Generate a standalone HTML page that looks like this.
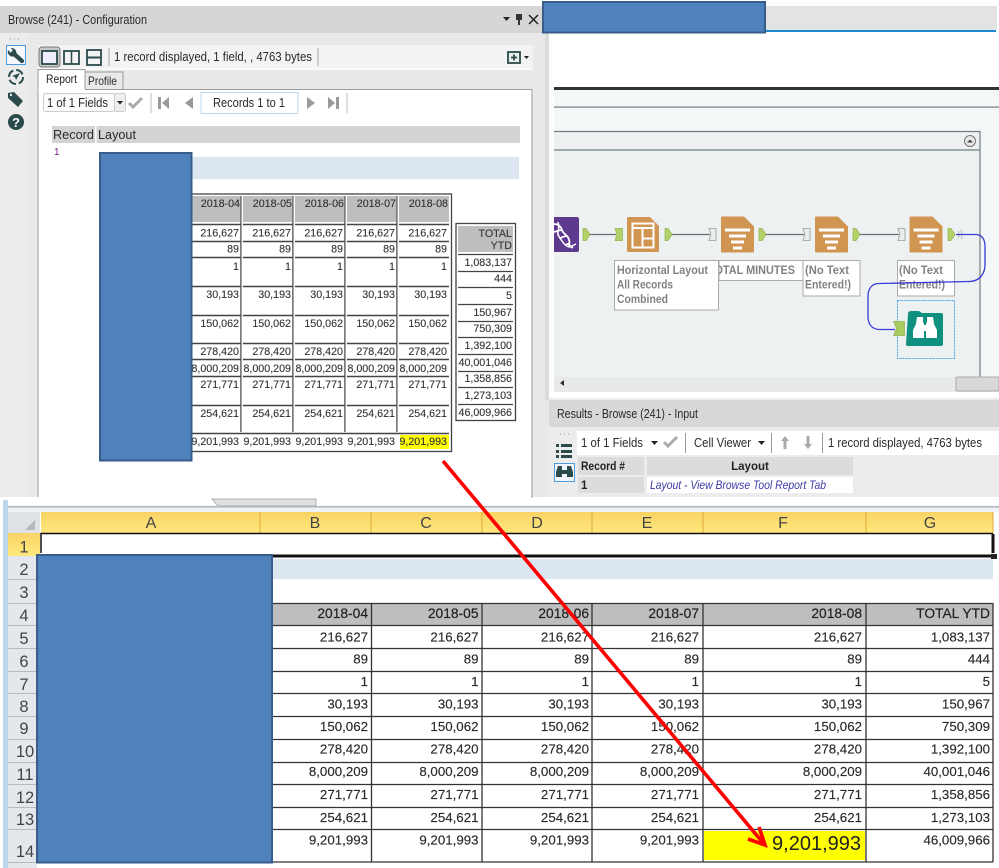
<!DOCTYPE html>
<html>
<head>
<meta charset="utf-8">
<title>Browse Configuration</title>
<style>
html,body{margin:0;padding:0;background:#fff;width:999px;height:868px;overflow:hidden}
svg{display:block;font-family:"Liberation Sans",Arial,sans-serif;filter:blur(.35px)}
</style>
</head>
<body>
<svg xmlns="http://www.w3.org/2000/svg" width="999" height="868" viewBox="0 0 999 868">
<defs>
<linearGradient id="hd" x1="0" y1="0" x2="0" y2="1"><stop offset="0" stop-color="#f9d265"/><stop offset="1" stop-color="#ffe97e"/></linearGradient>
<clipPath id="cv"><rect x="554" y="90" width="445" height="300"/></clipPath>
<g id="flt">
<path d="M0 1q0-1 1-1h22l10 10v25q0 1-1 1H1q-1 0-1-1z" fill="#d19552"/>
<path d="M4 12h25v3H4zM8 18h17v3H8zM10 24h13v3H10zM12 30h9v3h-9z" fill="#fff"/>
</g>
<path id="out" d="M0 0h3l4 6-4 6H0z" fill="#b3d26a" stroke="#8fb04a" stroke-width=".7"/>
<path id="inp" d="M0 0h7v12H0l2-6z" fill="#e9eded" stroke="#999" stroke-width=".8"/>
</defs>

<!-- LEFT PANEL -->
<rect x="0" y="6" width="549" height="491" fill="#e9e9e9"/>
<rect x="0" y="6" width="549" height="27" fill="#d6d6d6"/>
<text x="8" y="24" font-size="12.500" fill="#2a2a2a" textLength="139" lengthAdjust="spacingAndGlyphs">Browse (241) - Configuration</text>
<path d="M503 17h7l-3.500 4z" fill="#222"/>
<path d="M516 14h6v6h-2v5h-2v-5h-2z" fill="#333"/>
<path d="M529 15l9 9M538 15l-9 9" stroke="#222" stroke-width="1.500"/>
<!-- side toolbar -->
<rect x="0" y="33" width="27" height="464" fill="#ececec"/>
<path d="M10 39h1M14 39h1M18 39h1" stroke="#999"/>
<rect x="6.500" y="45.500" width="19" height="19" fill="#f5f8fb" stroke="#4f9be0"/>
<path d="M13 53l9 8" stroke="#2b4a4a" stroke-width="4.200" stroke-linecap="round" fill="none"/>
<path d="M8 50a5 5 0 0 0 7 6l1-1a5 5 0 0 0-5-7l2 3-2 2z" fill="#2b4a4a"/>
<circle cx="16" cy="77" r="7" fill="none" stroke="#2b4a4a" stroke-width="2" stroke-dasharray="8 3"/>
<path d="M20 73l-8 3 3 1 1 3z" fill="#2b4a4a"/>
<path d="M8 93l6-1 9 9-5 6-10-9z" fill="#2b4a4a"/>
<circle cx="11" cy="95" r="1.200" fill="#ececec"/>
<circle cx="16" cy="122" r="8" fill="#2b4a4a"/>
<text x="16" y="127" font-size="13" font-weight="bold" fill="#fff" text-anchor="middle">?</text>
<!-- main white panel -->
<rect x="38" y="89" width="494" height="417" fill="#fff"/>
<rect x="38" y="45" width="495" height="23" fill="#f3f3f3"/>
<rect x="38" y="68" width="495" height="2" fill="#fafafa"/>
<path d="M38 497V89.500H532V498" fill="none" stroke="#9a9a9a"/>
<rect x="39" y="47" width="21" height="20" rx="3" fill="#c9c9c9" stroke="#777"/>
<rect x="42" y="51" width="15" height="13" fill="#eef" stroke="#2b4a4a" stroke-width="1.800"/>
<rect x="64" y="51" width="15" height="13" fill="#f3f3f3" stroke="#2b4a4a" stroke-width="1.800"/>
<path d="M71.500 51v13" stroke="#2b4a4a" stroke-width="1.500"/>
<rect x="87" y="50" width="14" height="15" fill="#f3f3f3" stroke="#2b4a4a" stroke-width="1.800"/>
<path d="M87 57.500h14" stroke="#2b4a4a" stroke-width="2"/>
<path d="M109 48v18M318 48v18" stroke="#aaa"/>
<text x="114" y="61" font-size="13" fill="#2a2a2a" textLength="198" lengthAdjust="spacingAndGlyphs">1 record displayed, 1 field, , 4763 bytes</text>
<rect x="508" y="52" width="12" height="11" fill="#e8eeee" stroke="#2b4a4a" stroke-width="1.800"/>
<path d="M514 54.500v6M511 57.500h6" stroke="#2b4a4a" stroke-width="1.800"/>
<path d="M524 56h5l-2.500 3z" fill="#222"/>
<!-- tabs -->
<path d="M85 89V72h38v17" fill="#e9e9e9" stroke="#999"/>
<text x="88" y="85" font-size="12" fill="#2a2a2a" textLength="29" lengthAdjust="spacingAndGlyphs">Profile</text>
<path d="M38 90V69.500h47V90z" fill="#fff"/>
<path d="M38 89V69.500h47V89" fill="none" stroke="#999"/>
<text x="46" y="83" font-size="12" fill="#222" textLength="31" lengthAdjust="spacingAndGlyphs">Report</text>
<!-- nav bar -->
<rect x="43.500" y="93.500" width="71" height="18" rx="2" fill="#fbfbfb" stroke="#ccc"/>
<text x="47" y="107" font-size="12.500" fill="#2a2a2a" textLength="61" lengthAdjust="spacingAndGlyphs">1 of 1 Fields</text>
<rect x="114.500" y="93.500" width="11" height="18" rx="2" fill="#eee" stroke="#ccc"/>
<path d="M117 101h6l-3 3.500z" fill="#222"/>
<path d="M129 103l4 4 9-9" fill="none" stroke="#aaa" stroke-width="3"/>
<path d="M151 93v20M347 93v20" stroke="#bbb"/>
<path d="M158 97h3v12h-3zM169 97v12l-7-6z" fill="#9a9a9a"/>
<path d="M193 97v12l-8-6z" fill="#9a9a9a"/>
<rect x="201" y="92.500" width="97" height="21" fill="#fff" stroke="#bcd6ec"/>
<text x="213" y="107" font-size="12.500" fill="#2a2a2a" textLength="72" lengthAdjust="spacingAndGlyphs">Records 1 to 1</text>
<path d="M307 97l8 6-8 6z" fill="#9a9a9a"/>
<path d="M328 97l7 6-7 6zM336 97h3v12h-3z" fill="#9a9a9a"/>
<rect x="52" y="126" width="468" height="17" fill="#d3d3d3"/>
<rect x="95" y="126" width="1.500" height="17" fill="#fff"/>
<text x="53" y="139" font-size="13" fill="#2a2a2a" textLength="41" lengthAdjust="spacingAndGlyphs">Record</text>
<text x="98" y="139" font-size="13" fill="#2a2a2a" textLength="38" lengthAdjust="spacingAndGlyphs">Layout</text>
<text x="54" y="155" font-size="10" fill="#7a1a8a">1</text>
<rect x="192" y="157" width="327" height="22" fill="#dce6f1"/>

<!-- UPPER TABLE -->
<rect x="190" y="194" width="261.500" height="257.500" fill="#fff" stroke="#444" stroke-width="1.300"/>
<path d="M399 196h50V222h-50zM347 196h49v26h-49zM295 196h49v26h-49zM243 196h49v26h-49zM192 196h48v26h-48z" fill="#bebebe"/>
<g stroke="#444" stroke-width="1.400" fill="none">
<path d="M192 224.500h257M192 241.500h257M192 257.500h257M192 286.500h257M192 315.500h257M192 343.500h257M192 359.500h257M192 376.500h257M192 405.500h257M192 433.500h257"/>
<path d="M241 196v236M293 196v236M345 196v236M397 196v236"/>
</g>
<g stroke="#fff" stroke-width="1.400">
<path d="M242.200 196v236M294.200 196v236M346.200 196v236M398.200 196v236"/>
</g>
<path d="M400 435h49v14h-49z" fill="#ffff00"/>
<g font-size="10.700" fill="#333" stroke="#333" stroke-width=".12" text-anchor="end">
<text y="207"><tspan x="240">2018-04</tspan><tspan x="292">2018-05</tspan><tspan x="344">2018-06</tspan><tspan x="396">2018-07</tspan><tspan x="448">2018-08</tspan></text>
<text y="236.500"><tspan x="239">216,627</tspan><tspan x="291">216,627</tspan><tspan x="343">216,627</tspan><tspan x="395">216,627</tspan><tspan x="447">216,627</tspan></text>
<text y="252.500"><tspan x="239">89</tspan><tspan x="291">89</tspan><tspan x="343">89</tspan><tspan x="395">89</tspan><tspan x="447">89</tspan></text>
<text y="270"><tspan x="239">1</tspan><tspan x="291">1</tspan><tspan x="343">1</tspan><tspan x="395">1</tspan><tspan x="447">1</tspan></text>
<text y="298"><tspan x="239">30,193</tspan><tspan x="291">30,193</tspan><tspan x="343">30,193</tspan><tspan x="395">30,193</tspan><tspan x="447">30,193</tspan></text>
<text y="327"><tspan x="239">150,062</tspan><tspan x="291">150,062</tspan><tspan x="343">150,062</tspan><tspan x="395">150,062</tspan><tspan x="447">150,062</tspan></text>
<text y="355"><tspan x="239">278,420</tspan><tspan x="291">278,420</tspan><tspan x="343">278,420</tspan><tspan x="395">278,420</tspan><tspan x="447">278,420</tspan></text>
<text y="372"><tspan x="239">8,000,209</tspan><tspan x="291">8,000,209</tspan><tspan x="343">8,000,209</tspan><tspan x="395">8,000,209</tspan><tspan x="447">8,000,209</tspan></text>
<text y="388"><tspan x="239">271,771</tspan><tspan x="291">271,771</tspan><tspan x="343">271,771</tspan><tspan x="395">271,771</tspan><tspan x="447">271,771</tspan></text>
<text y="417"><tspan x="239">254,621</tspan><tspan x="291">254,621</tspan><tspan x="343">254,621</tspan><tspan x="395">254,621</tspan><tspan x="447">254,621</tspan></text>
<text y="445"><tspan x="239">9,201,993</tspan><tspan x="291">9,201,993</tspan><tspan x="343">9,201,993</tspan><tspan x="395">9,201,993</tspan><tspan x="447">9,201,993</tspan></text>
</g>
<!-- right total table -->
<rect x="456" y="223.500" width="59.500" height="197" fill="#fff" stroke="#444" stroke-width="1.300"/>
<rect x="458" y="226" width="55" height="26" fill="#bebebe"/>
<path d="M458 254.500h55M458 271.500h55M458 287.500h55M458 304.500h55M458 321.500h55M458 337.500h55M458 354.500h55M458 371.500h55M458 387.500h55M458 404.500h55" stroke="#444" stroke-width="1.300"/>
<g font-size="10.700" fill="#333" stroke="#333" stroke-width=".12" text-anchor="end">
<text x="512" y="237">TOTAL</text><text x="512" y="249">YTD</text>
<text x="512" y="266">1,083,137</text><text x="512" y="282">444</text><text x="512" y="299">5</text><text x="512" y="316">150,967</text><text x="512" y="332">750,309</text><text x="512" y="349">1,392,100</text><text x="512" y="366">40,001,046</text><text x="512" y="382">1,358,856</text><text x="512" y="399">1,273,103</text><text x="512" y="416">46,009,966</text>
</g>
<rect x="100" y="153" width="91.500" height="307.500" fill="#4f81bd" stroke="#385d8a" stroke-width="2"/>

<!-- TOP RIGHT -->
<rect x="765" y="6" width="232" height="24" fill="#e3e3e3"/>
<rect x="765" y="30" width="231" height="2" fill="#1e88d0"/>
<rect x="545" y="33" width="4" height="367" fill="#dcdcdc"/>

<!-- CANVAS -->
<rect x="554" y="90" width="445" height="302" fill="#f4f7f8"/>
<rect x="554" y="87" width="445" height="3" fill="#333"/>
<rect x="554" y="106.500" width="445" height="1.200" fill="#6d7f7f"/>
<rect x="554" y="131" width="426" height="246" fill="#eef1f2"/>
<path d="M554 131.500h426V377M554 150h426" fill="none" stroke="#6d7f7f" stroke-width="1.200"/>
<circle cx="970" cy="141" r="5.500" fill="#e8e8e8" stroke="#777"/>
<path d="M967 142.500l3-3 3 3z" fill="#444"/>
<rect x="554" y="377" width="445" height="15" fill="#e8eaea"/>
<path d="M564 380v6l-4-3z" fill="#333"/>
<rect x="956" y="377" width="43" height="14" rx="1.500" fill="#d8d8d8" stroke="#aaa"/>

<!-- labels -->
<g clip-path="url(#cv)">
<rect x="719" y="260.500" width="84" height="20" fill="#fff" stroke="#aaa"/>
<text x="708" y="274" font-size="11.500" font-weight="bold" fill="#7f8386" textLength="87" lengthAdjust="spacingAndGlyphs">TOTAL MINUTES</text>
<rect x="614.500" y="260.500" width="104" height="49.500" fill="#fff" stroke="#aaa"/>
<g font-size="11.500" font-weight="bold" fill="#7f8386">
<text x="617" y="274" textLength="91" lengthAdjust="spacingAndGlyphs">Horizontal Layout</text>
<text x="617" y="288.500" textLength="56" lengthAdjust="spacingAndGlyphs">All Records</text>
<text x="617" y="303" textLength="51" lengthAdjust="spacingAndGlyphs">Combined</text>
</g>
<rect x="803" y="260.500" width="57" height="35.500" fill="#fff" stroke="#aaa"/>
<rect x="897.500" y="260.500" width="57" height="35.500" fill="#fff" stroke="#aaa"/>
<g font-size="11.500" font-weight="bold" fill="#7f8386">
<text x="805" y="274" textLength="44" lengthAdjust="spacingAndGlyphs">(No Text</text>
<text x="805" y="288.500" textLength="46" lengthAdjust="spacingAndGlyphs">Entered!)</text>
<text x="899" y="274" textLength="44" lengthAdjust="spacingAndGlyphs">(No Text</text>
<text x="899" y="288.500" textLength="46" lengthAdjust="spacingAndGlyphs">Entered!)</text>
</g>
<!-- nodes -->
<path d="M540 217h37q2 0 2 2v31q0 2-2 2h-37z" fill="#5e3a8e"/>
<path d="M554 224c5 0 7 3 8 6s3 4 5 6 3 6 2 9l4 3M554 232c3-1 6-2 8-2M560 238c3-1 5-2 7-2M566 245c1-1 3-2 3 0" fill="none" stroke="#fff" stroke-width="1.800"/>
<path d="M558 222c1 4 1 7 0 10s2 6 4 9 5 6 8 6l6-3" fill="none" stroke="#fff" stroke-width="1.500"/>
<path d="M627 218q0-1 1-1h22l9 9v25q0 1-1 1h-30q-1 0-1-1z" fill="#d19552"/>
<path d="M632.500 223.500h21v24h-21zM632.500 228h21M642.500 228v19.500M642.500 238.500h11" fill="none" stroke="#fff" stroke-width="2"/>
<use href="#flt" x="721" y="216.500"/>
<use href="#flt" x="815" y="216.500"/>
<use href="#flt" x="909.500" y="216.500"/>
<!-- connections -->
<path d="M589 234.500h27M671 234.500h39M765 234.500h39M860 234.500h39" stroke="#6a7070" stroke-width="1.300"/>
<use href="#out" x="583" y="228.500"/>
<use href="#out" x="665" y="228.500"/>
<use href="#out" x="759" y="228.500"/>
<use href="#out" x="853" y="228.500"/>
<use href="#out" x="948" y="228.500"/>
<path d="M615 228.500h7.500v12H615l2-6z" fill="#b3d26a" stroke="#8fb04a" stroke-width=".7"/>
<use href="#inp" x="709" y="228.500"/>
<use href="#inp" x="803" y="228.500"/>
<use href="#inp" x="898" y="228.500"/>
<path d="M958 231q2 3.500 0 7M961 230q2 4.500 0 9" fill="none" stroke="#bbb"/>
<path d="M956 234.500h20c6 0 9 5 9 12v18c0 10-6 17-16 17l-90 2c-7 0-11 5-11 13v20c0 8 4 13 12 13h15" fill="none" stroke="#3a3ad8" stroke-width="1.300"/>
<rect x="897.500" y="300.500" width="57" height="58" fill="none" stroke="#4aa3e8" stroke-dasharray="2 1"/>
<path d="M908 314q0-3 3-3h8l3 2h19q2 0 2 2v29q0 2-2 2h-33q-2 0-2-2z" fill="#10917f"/>
<path d="M917 317h6v5l1 2v14h-11v-8l3-6zM927 317h6l1 7 3 6v8h-11v-14l1-2z" fill="#fff"/>
<rect x="923" y="325" width="4" height="6" fill="#fff"/>
<path d="M893.500 321.500h11v14h-11l3-7z" fill="#a8cc60" stroke="#8fb04a" stroke-width=".7"/>
</g>

<!-- RESULTS -->
<rect x="549" y="392" width="450" height="6" fill="#fff"/>
<rect x="549" y="398" width="450" height="99" fill="#ececec"/>
<rect x="549" y="400" width="450" height="27" fill="#d8d8d8"/>
<text x="557" y="418" font-size="12.500" fill="#2a2a2a" textLength="141" lengthAdjust="spacingAndGlyphs">Results - Browse (241) - Input</text>
<rect x="577" y="431" width="422" height="24" fill="#fff"/>
<path d="M560 434h1M564 434h1M568 434h1" stroke="#999"/>
<path d="M556 444h3v3h-3zM561 444h11v3h-11zM556 450h3v3h-3zM561 450h11v3h-11zM556 455h3v3h-3zM561 455h11v3h-11z" fill="#2b4a4a"/>
<rect x="554.500" y="463.500" width="20" height="18" fill="#f2f6fa" stroke="#4f9be0"/>
<path d="M558 466h4v11h-6v-5zM567 466h4l2 6v5h-6z" fill="#2b4a4a"/>
<rect x="562" y="470" width="5" height="4" fill="#2b4a4a"/>
<text x="581" y="447" font-size="12.500" fill="#2a2a2a" textLength="62" lengthAdjust="spacingAndGlyphs">1 of 1 Fields</text>
<path d="M651 441h7l-3.500 4z" fill="#222"/>
<path d="M664 442l4 4 9-9" fill="none" stroke="#aaa" stroke-width="3"/>
<path d="M685.500 433v20M771.500 433v20M822.500 433v20" stroke="#999"/>
<text x="694" y="447" font-size="12.500" fill="#2a2a2a" textLength="57" lengthAdjust="spacingAndGlyphs">Cell Viewer</text>
<path d="M758 441h7l-3.500 4z" fill="#222"/>
<path d="M785 436l4 5h-2.500v8h-3v-8H781z" fill="#aaa"/>
<path d="M808 449l4-5h-2.500v-8h-3v8H804z" fill="#aaa"/>
<text x="828" y="447" font-size="12.500" fill="#2a2a2a" textLength="154" lengthAdjust="spacingAndGlyphs">1 record displayed, 4763 bytes</text>
<rect x="578" y="457" width="66" height="18" fill="#dcdcdc"/>
<rect x="647" y="457" width="206" height="18" fill="#dcdcdc"/>
<rect x="578" y="477" width="66" height="16" fill="#dcdcdc"/>
<rect x="647" y="477" width="206" height="16" fill="#fff"/>
<text x="581" y="470" font-size="11.500" font-weight="bold" fill="#222" textLength="44" lengthAdjust="spacingAndGlyphs">Record #</text>
<text x="750" y="470" font-size="11.500" font-weight="bold" fill="#222" text-anchor="middle">Layout</text>
<text x="581" y="489" font-size="11.500" font-weight="bold" fill="#222">1</text>
<text x="650" y="489" font-size="11.500" font-style="italic" fill="#3a3aa8" textLength="176" lengthAdjust="spacingAndGlyphs">Layout - View Browse Tool Report Tab</text>

<!-- EXCEL -->
<rect x="0" y="498" width="999" height="370" fill="#fff"/>
<path d="M212 499l6 7h98v-7z" fill="#e0e0e0" stroke="#999" stroke-width=".7"/>
<rect x="8" y="506" width="991" height="1.500" fill="#b0b4bc"/>
<rect x="8" y="507.500" width="991" height="4.500" fill="#eef1f6"/>
<rect x="3" y="500" width="5" height="368" fill="#bcd6ee"/>
<rect x="8" y="512" width="32" height="21" fill="#dfe3e8"/>
<path d="M35 520v10H25z" fill="#b4b9c0"/>
<rect x="41" y="512" width="952" height="21" fill="url(#hd)"/>
<path d="M260 512v21M371 512v21M482 512v21M592 512v21M703 512v21M866 512v21M993 512v21" stroke="#e0a83a"/>
<rect x="8" y="533" width="32" height="23" fill="url(#hd)"/>
<rect x="8" y="556" width="29" height="312" fill="#e4e7ec"/>
<path d="M8 579.500h29M8 603.500h29M8 625.500h29M8 648.500h29M8 671.500h29M8 693.500h29M8 716.500h29M8 739.500h29M8 762.500h29M8 784.500h29M8 807.500h29M8 829.500h29M8 862.500h29" stroke="#b5b8bd"/>
<g font-size="16" fill="#444" text-anchor="middle">
<text x="151" y="528">A</text><text x="315" y="528">B</text><text x="426" y="528">C</text><text x="537" y="528">D</text><text x="647" y="528">E</text><text x="783" y="528">F</text><text x="930" y="528">G</text>
</g>
<g font-size="16.500" fill="#444" text-anchor="middle">
<text x="24" y="552.500">1</text><text x="24" y="575">2</text><text x="24" y="598">3</text><text x="24" y="621">4</text><text x="24" y="644">5</text><text x="24" y="667">6</text><text x="24" y="690">7</text><text x="24" y="712">8</text><text x="24" y="734">9</text><text x="25" y="757">10</text><text x="25" y="780">11</text><text x="25" y="803">12</text><text x="25" y="825">13</text><text x="25" y="857">14</text>
</g>
<!-- row 1 selection -->
<path d="M41 553V533.500H993" fill="none" stroke="#111" stroke-width="1.500"/>
<path d="M272 556h720" stroke="#111" stroke-width="3"/>
<path d="M993 534v19" stroke="#111" stroke-width="3"/>
<rect x="991" y="554" width="6" height="5" fill="#222"/>
<rect x="272" y="559" width="721" height="20" fill="#dce6f1"/>
<rect x="272" y="604" width="721" height="21" fill="#bebebe"/>
<g stroke="#333" stroke-width="1.300" fill="none">
<path d="M272 603.500H993M272 625.500H993M272 648.500H993M272 671.500H993M272 693.500H993M272 716.500H993M272 739.500H993M272 762.500H993M272 784.500H993M272 807.500H993M272 829.500H993M272 862H993"/>
<path d="M371.500 603v259M482 603v259M592 603v259M703 603v259M866 603v259M993 603v259"/>
</g>
<rect x="704" y="831" width="161" height="29" fill="#ffff00"/>
<g font-size="13.800" fill="#222" stroke="#222" stroke-width=".2" text-anchor="end">
<text y="618"><tspan x="368">2018-04</tspan><tspan x="478.500">2018-05</tspan><tspan x="589">2018-06</tspan><tspan x="699">2018-07</tspan><tspan x="862">2018-08</tspan><tspan x="990">TOTAL YTD</tspan></text>
</g>
<g font-size="13.300" fill="#2a2a2a" stroke="#2a2a2a" stroke-width=".15" text-anchor="end">
<text y="641.500"><tspan x="368">216,627</tspan><tspan x="478.500">216,627</tspan><tspan x="589">216,627</tspan><tspan x="699">216,627</tspan><tspan x="862">216,627</tspan><tspan x="990">1,083,137</tspan></text>
<text y="663.500"><tspan x="368">89</tspan><tspan x="478.500">89</tspan><tspan x="589">89</tspan><tspan x="699">89</tspan><tspan x="862">89</tspan><tspan x="990">444</tspan></text>
<text y="686"><tspan x="368">1</tspan><tspan x="478.500">1</tspan><tspan x="589">1</tspan><tspan x="699">1</tspan><tspan x="862">1</tspan><tspan x="990">5</tspan></text>
<text y="708.500"><tspan x="368">30,193</tspan><tspan x="478.500">30,193</tspan><tspan x="589">30,193</tspan><tspan x="699">30,193</tspan><tspan x="862">30,193</tspan><tspan x="990">150,967</tspan></text>
<text y="731"><tspan x="368">150,062</tspan><tspan x="478.500">150,062</tspan><tspan x="589">150,062</tspan><tspan x="699">150,062</tspan><tspan x="862">150,062</tspan><tspan x="990">750,309</tspan></text>
<text y="753.500"><tspan x="368">278,420</tspan><tspan x="478.500">278,420</tspan><tspan x="589">278,420</tspan><tspan x="699">278,420</tspan><tspan x="862">278,420</tspan><tspan x="990">1,392,100</tspan></text>
<text y="776"><tspan x="368">8,000,209</tspan><tspan x="478.500">8,000,209</tspan><tspan x="589">8,000,209</tspan><tspan x="699">8,000,209</tspan><tspan x="862">8,000,209</tspan><tspan x="990">40,001,046</tspan></text>
<text y="799"><tspan x="368">271,771</tspan><tspan x="478.500">271,771</tspan><tspan x="589">271,771</tspan><tspan x="699">271,771</tspan><tspan x="862">271,771</tspan><tspan x="990">1,358,856</tspan></text>
<text y="822"><tspan x="368">254,621</tspan><tspan x="478.500">254,621</tspan><tspan x="589">254,621</tspan><tspan x="699">254,621</tspan><tspan x="862">254,621</tspan><tspan x="990">1,273,103</tspan></text>
<text y="844.500"><tspan x="368">9,201,993</tspan><tspan x="478.500">9,201,993</tspan><tspan x="589">9,201,993</tspan><tspan x="699">9,201,993</tspan><tspan x="990">46,009,966</tspan></text>
</g>
<text x="861" y="850" font-size="20" fill="#222" text-anchor="end">9,201,993</text>
<rect x="37" y="555" width="235" height="307.500" fill="#4f81bd" stroke="#385d8a" stroke-width="2"/>

<!-- top blue redaction -->
<rect x="543" y="2" width="222" height="30.500" fill="#4f81bd" stroke="#385d8a" stroke-width="2"/>

<!-- red arrow -->
<path d="M443 461L764 844" fill="none" stroke="#ff0000" stroke-width="3.600"/>
<path d="M748 839l17 6-6-18" fill="none" stroke="#ff0000" stroke-width="3.600"/>
</svg>
</body>
</html>
